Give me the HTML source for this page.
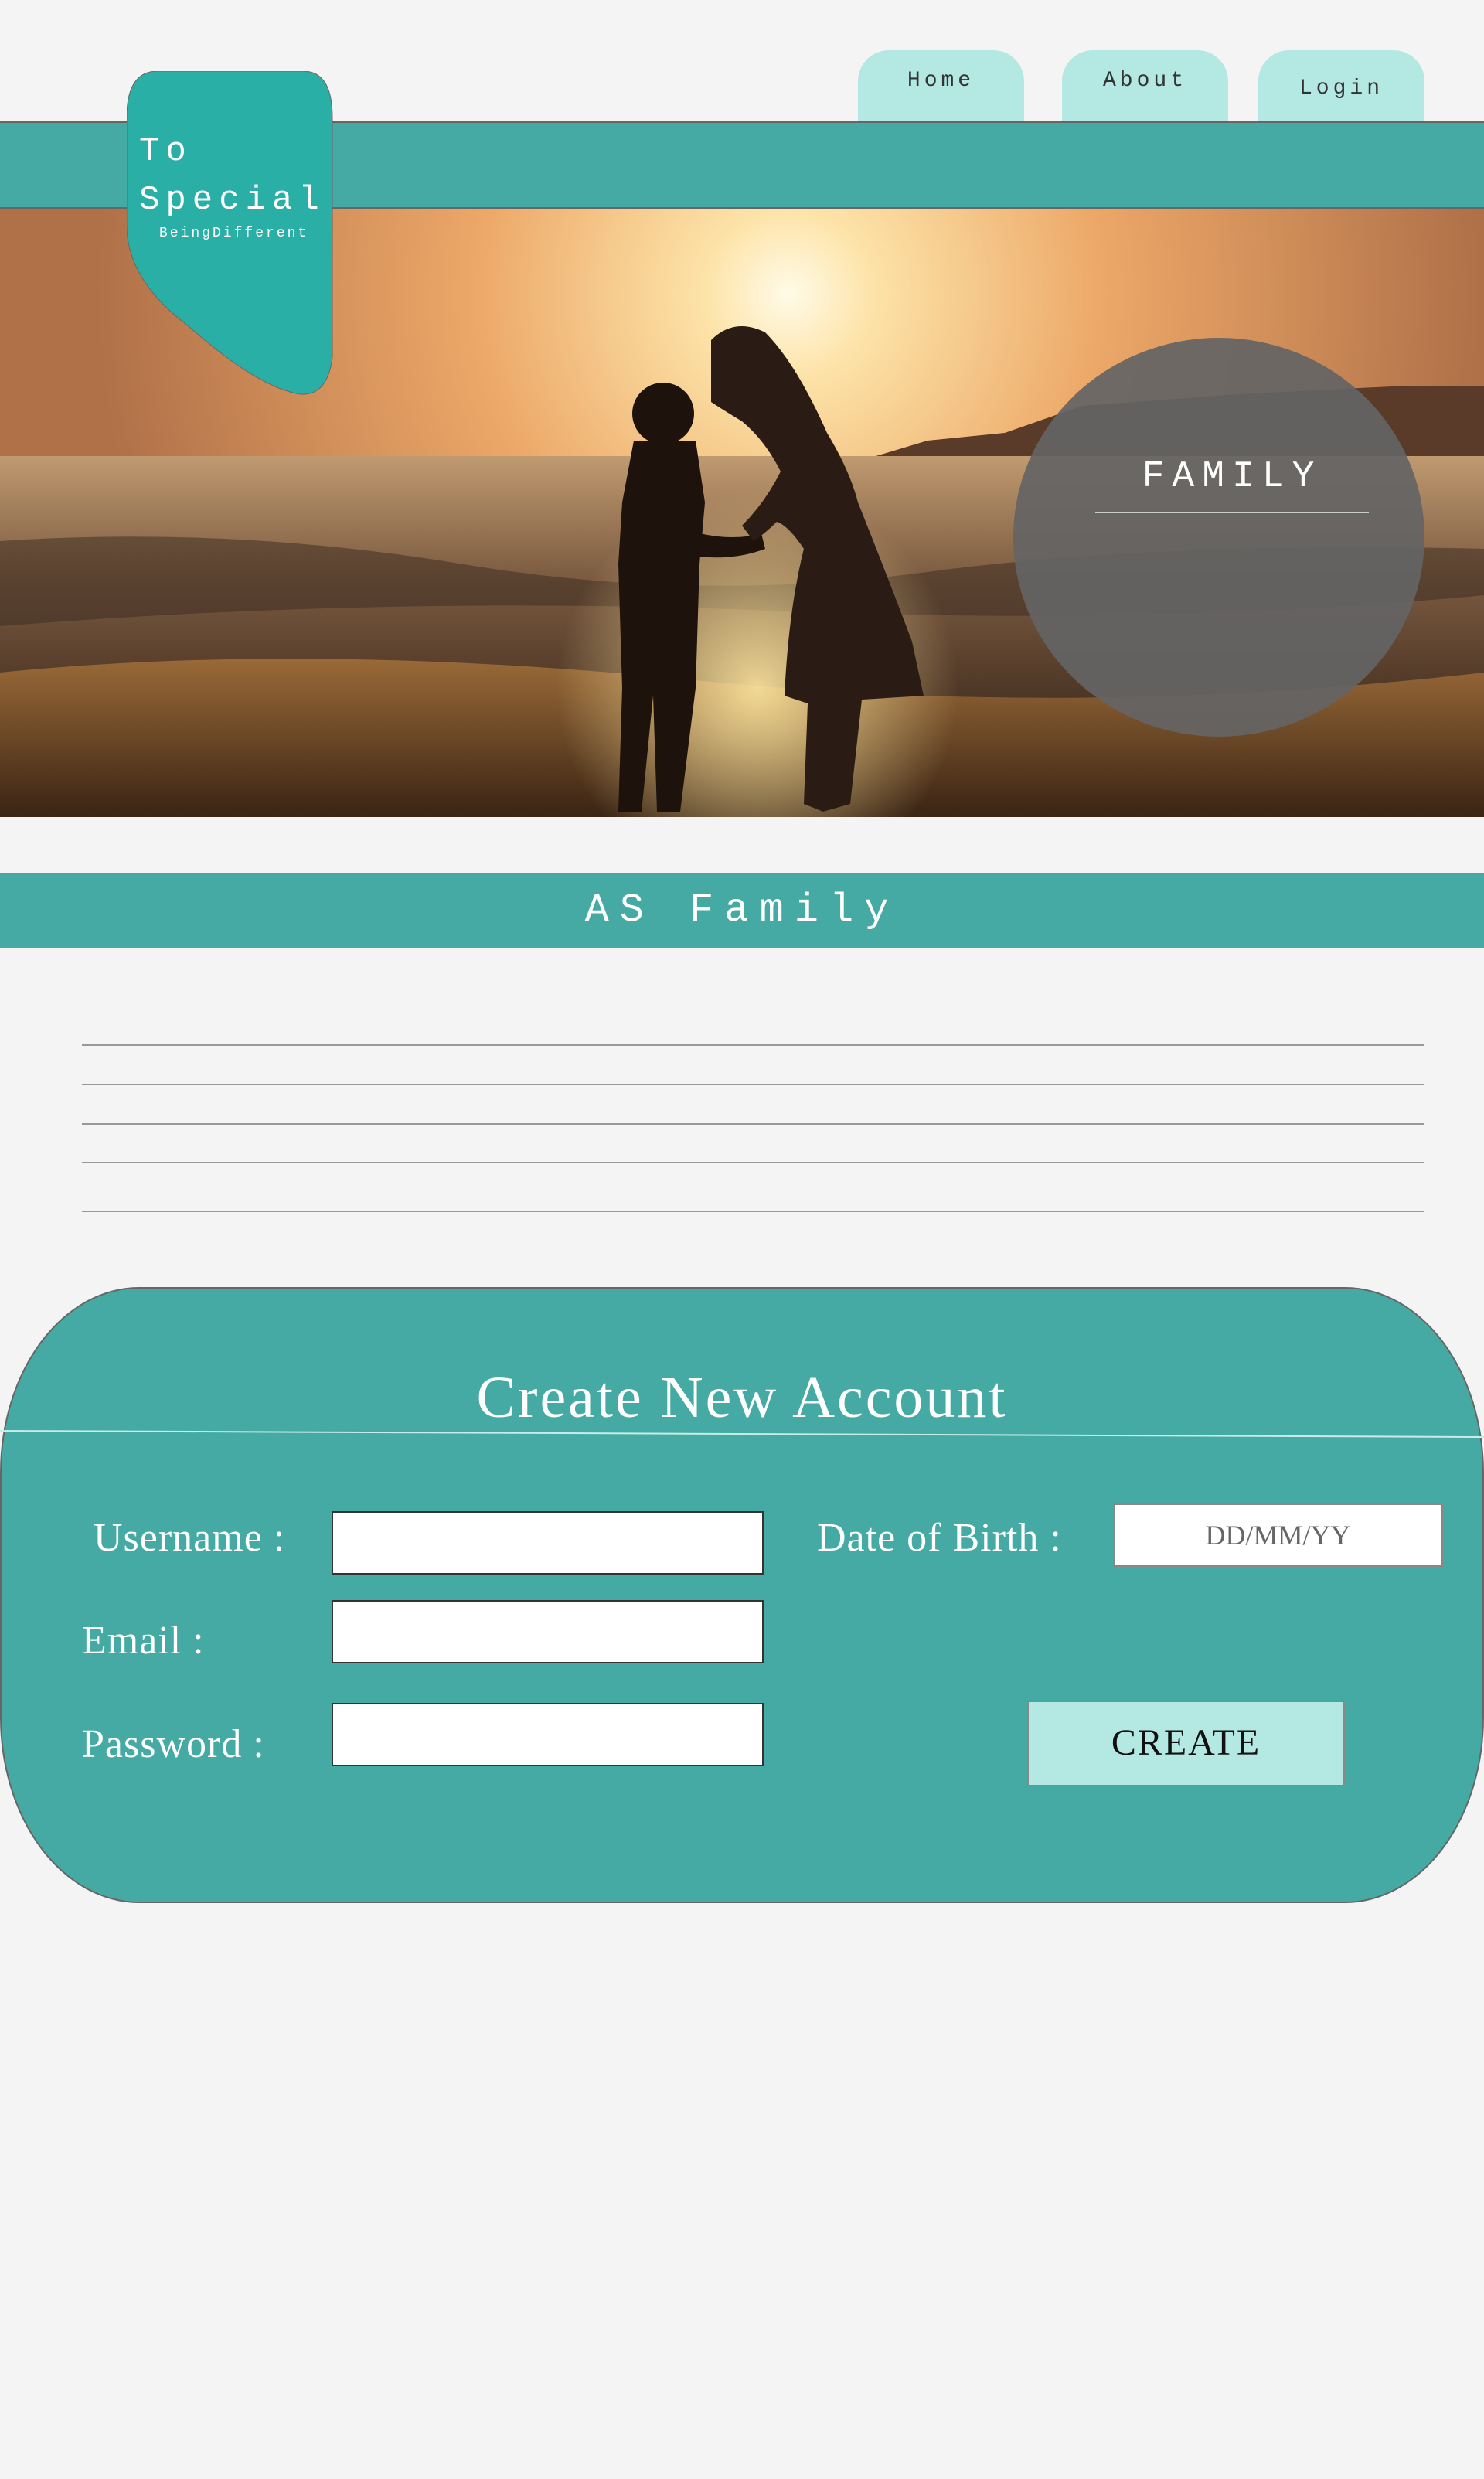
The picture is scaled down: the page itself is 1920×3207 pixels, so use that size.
<!DOCTYPE html>
<html><head><meta charset="utf-8"><style>
html,body{margin:0;padding:0}
body{width:1920px;height:3207px;background:#f4f4f4;position:relative;overflow:hidden;font-family:"Liberation Serif",serif}
.abs{position:absolute}
.nav{position:absolute;top:65px;height:92px;width:215px;background:#b3e8e3;border-radius:40px 40px 0 0;text-align:center;font-family:"Liberation Mono",monospace;font-size:28px;color:#333;letter-spacing:5px;line-height:80px}
.band{position:absolute;left:0;top:157px;width:1920px;height:113px;background:#44aaa3;border-top:2px solid #666;border-bottom:2px solid #666;box-sizing:border-box}
.line{position:absolute;left:106px;width:1737px;height:2px;background:#999}
.lbl{position:absolute;color:#fff;font-size:52px;font-family:"Liberation Serif",serif;letter-spacing:1px}
.inp{position:absolute;background:#fff;border:2px solid #333;box-sizing:border-box}
</style></head><body>

<div class="nav" style="left:1110px">Home</div>
<div class="nav" style="left:1374px">About</div>
<div class="nav" style="left:1628px;line-height:100px">Login</div>

<div class="band"></div>

<svg class="abs" style="left:0;top:270px" width="1920" height="787" viewBox="0 0 1920 787">
<defs>
<radialGradient id="sun" cx="1020" cy="110" r="900" gradientUnits="userSpaceOnUse">
<stop offset="0" stop-color="#fffbe8"/><stop offset="0.12" stop-color="#fde3a8"/><stop offset="0.45" stop-color="#eca868"/><stop offset="1" stop-color="#b07048"/></radialGradient>
<linearGradient id="sea" x1="0" y1="0" x2="0" y2="1"><stop offset="0" stop-color="#c09a70"/><stop offset="0.5" stop-color="#7a5a40"/><stop offset="1" stop-color="#4a3424"/></linearGradient>
<linearGradient id="sand" x1="0" y1="0" x2="0" y2="1"><stop offset="0" stop-color="#9a6a38"/><stop offset="1" stop-color="#3a2414"/></linearGradient>
<radialGradient id="glow" cx="980" cy="620" r="260" gradientUnits="userSpaceOnUse"><stop offset="0" stop-color="#ffe7a0" stop-opacity="0.9"/><stop offset="1" stop-color="#ffe7a0" stop-opacity="0"/></radialGradient>
</defs>
<rect width="1920" height="787" fill="url(#sun)"/>
<path d="M1100 330 L1200 300 L1300 290 L1400 255 L1600 240 L1800 230 L1920 230 L1920 420 L1100 420Z" fill="#5a3a28"/>
<rect y="320" width="1920" height="320" fill="url(#sea)"/>
<path d="M0 430 Q300 410 600 460 T1200 470 T1920 440 L1920 500 Q1500 540 1000 520 T0 540Z" fill="#3a2a20" opacity="0.5"/>
<path d="M0 600 Q400 560 900 610 T1920 600 L1920 787 L0 787Z" fill="url(#sand)"/>
<rect y="300" width="1920" height="487" fill="url(#glow)"/>
<g fill="#1e120c">
<circle cx="858" cy="265" r="40"/>
<path d="M820 300 L900 300 L912 380 L905 460 L900 620 L880 780 L850 780 L845 630 L830 780 L800 780 L805 620 L800 460 L805 380Z"/>
<path d="M905 420 Q950 430 985 420 L990 440 Q950 455 905 450Z"/>
</g>
<path d="M920 170 Q950 140 990 160 Q1030 200 1070 290 Q1100 340 1110 380 Q1150 480 1180 560 L1195 630 L1115 635 L1100 770 L1065 780 L1040 770 L1045 640 L1015 630 Q1020 520 1040 440 Q1020 410 1005 405 Q990 420 975 430 L960 410 Q990 380 1010 340 Q990 300 960 275 Q935 260 920 250Z" fill="#2a1c14"/>
</svg>

<svg class="abs" style="left:164px;top:92px" width="268" height="420" viewBox="0 0 268 420">
<path d="M40 0 L228 0 Q266 0 266 60 L266 370 Q260 420 225 418 Q170 410 80 330 Q0 270 0 200 L0 60 Q0 0 40 0Z" fill="#2aafa6" stroke="#666" stroke-width="1"/>
<text x="16" y="115" fill="#fff" font-family="Liberation Mono" font-size="44" letter-spacing="8">To</text>
<text x="16" y="178" fill="#fff" font-family="Liberation Mono" font-size="44" letter-spacing="8">Special</text>
<text x="42" y="214" fill="#fff" font-family="Liberation Mono" font-size="18" letter-spacing="3">BeingDifferent</text>
</svg>

<div class="abs" style="left:1311px;top:437px;width:532px;height:516px;border-radius:50%;background:rgba(100,100,100,0.93)"></div>
<div class="abs" style="left:1417px;top:590px;width:354px;text-align:center;color:#fff;font-family:'Liberation Mono',monospace;font-size:48px;letter-spacing:10px">FAMILY</div>
<div class="abs" style="left:1417px;top:662px;width:354px;height:2px;background:#ccc"></div>

<div class="abs" style="left:0;top:1129px;width:1920px;height:98px;background:#44aaa3;border-top:1px solid #888;border-bottom:1px solid #888;box-sizing:border-box;text-align:center;color:#fff;font-family:'Liberation Mono',monospace;font-size:52px;letter-spacing:14px;line-height:96px">AS Family</div>

<div class="line" style="top:1351px"></div>
<div class="line" style="top:1402px"></div>
<div class="line" style="top:1453px"></div>
<div class="line" style="top:1503px"></div>
<div class="line" style="top:1566px"></div>

<div class="abs" style="left:0;top:1665px;width:1920px;height:797px;background:#44aaa3;border:2px solid #666;box-sizing:border-box;border-radius:180px / 240px"></div>
<div class="abs" style="left:0;top:1765px;width:1920px;text-align:center;color:#fff;font-size:76px;letter-spacing:3px">Create New Account</div>
<svg class="abs" style="left:0;top:1845px" width="1920" height="20"><line x1="0" y1="6" x2="1920" y2="14" stroke="#c9ece8" stroke-width="2"/></svg>

<div class="lbl" style="left:121px;top:1960px">Username :</div>
<div class="lbl" style="left:106px;top:2093px">Email :</div>
<div class="lbl" style="left:106px;top:2227px">Password :</div>
<div class="lbl" style="left:1057px;top:1960px">Date of Birth :</div>
<div class="inp" style="left:429px;top:1955px;width:559px;height:82px"></div>
<div class="inp" style="left:429px;top:2070px;width:559px;height:82px"></div>
<div class="inp" style="left:429px;top:2203px;width:559px;height:82px"></div>
<div class="inp" style="left:1440px;top:1945px;width:427px;height:82px;border-color:#888;text-align:center;color:#666;font-size:36px;line-height:78px">DD/MM/YY</div>
<div class="abs" style="left:1329px;top:2200px;width:411px;height:111px;background:#b3e8e3;border:2px solid #888;box-sizing:border-box;text-align:center;color:#111;font-size:48px;line-height:106px;letter-spacing:2px">CREATE</div>

</body></html>
